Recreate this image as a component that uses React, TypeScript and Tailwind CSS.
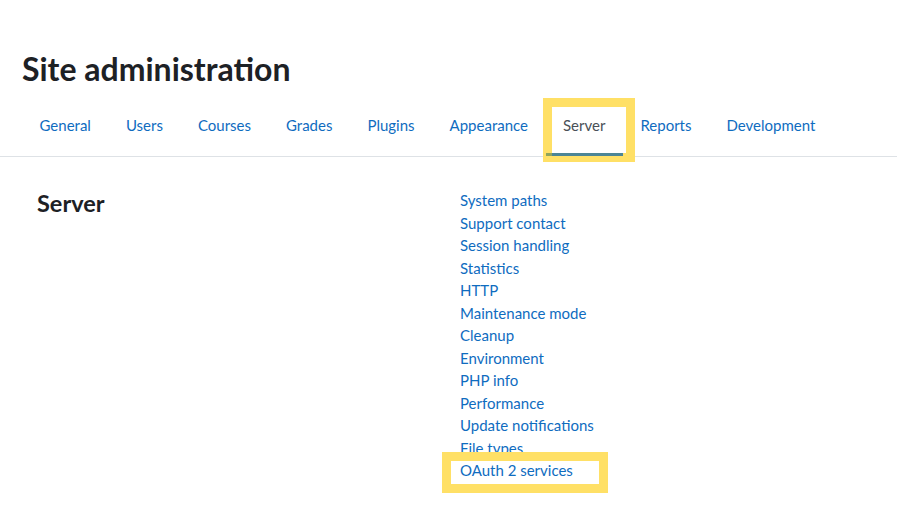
import React from "react";

const tabs = [
  "General",
  "Users",
  "Courses",
  "Grades",
  "Plugins",
  "Appearance",
  "Server",
  "Reports",
  "Development",
];

const links = [
  "System paths",
  "Support contact",
  "Session handling",
  "Statistics",
  "HTTP",
  "Maintenance mode",
  "Cleanup",
  "Environment",
  "PHP info",
  "Performance",
  "Update notifications",
  "File types",
  "OAuth 2 services",
];

const App = () => {
  return (
    <div
      className="w-[897px] h-[508px] bg-white overflow-hidden text-[#1d2125]"
      style={{ fontFamily: 'Lato, "Open Sans", sans-serif' }}
    >
      <div className="pl-[22px] pt-[48px]">
        <h1 className="text-[32px] leading-[42px] font-bold">Site administration</h1>
      </div>

      <nav className="mt-[10px] border-b border-[#dee2e6] pl-[22px] flex text-[15px]">
        {tabs.map((t) => (
          <div key={t} className="relative">
            <a
              className={
                t === "Server"
                  ? "block px-[17.5px] pt-[14px] pb-[20px] leading-[22px] text-[#495057]"
                  : "block px-[17.5px] pt-[14px] pb-[20px] leading-[22px] text-[#0f6cbf]"
              }
            >
              {t}
            </a>
            {t === "Server" && (
              <>
                <span className="absolute left-[-3px] top-[-2px] w-[92px] h-[64px] border-[9px] border-[#ffe066] pointer-events-none" />
                <span className="absolute left-0 right-0 bottom-0 h-[3px] flex pointer-events-none">
                  <span className="w-[6px] bg-[#8fa45c]" />
                  <span className="flex-1 bg-[#4b8596]" />
                </span>
              </>
            )}
          </div>
        ))}
      </nav>

      <div className="flex pl-[37px] pt-[33px]">
        <h2 className="w-[423px] text-[23.5px] leading-[28px] font-bold -mt-[1px]">Server</h2>
        <ul className="text-[15px] leading-[22.5px] text-[#0f6cbf] -mt-[1px]">
          {links.map((l) => (
            <li key={l}>
              <a className="relative inline-block">
                {l}
                {l === "OAuth 2 services" && (
                  <span className="absolute left-[-18px] top-[-7px] w-[166px] h-[41px] border-[9px] border-[#ffe066] pointer-events-none" />
                )}
              </a>
            </li>
          ))}
        </ul>
      </div>
    </div>
  );
};

export default App;
